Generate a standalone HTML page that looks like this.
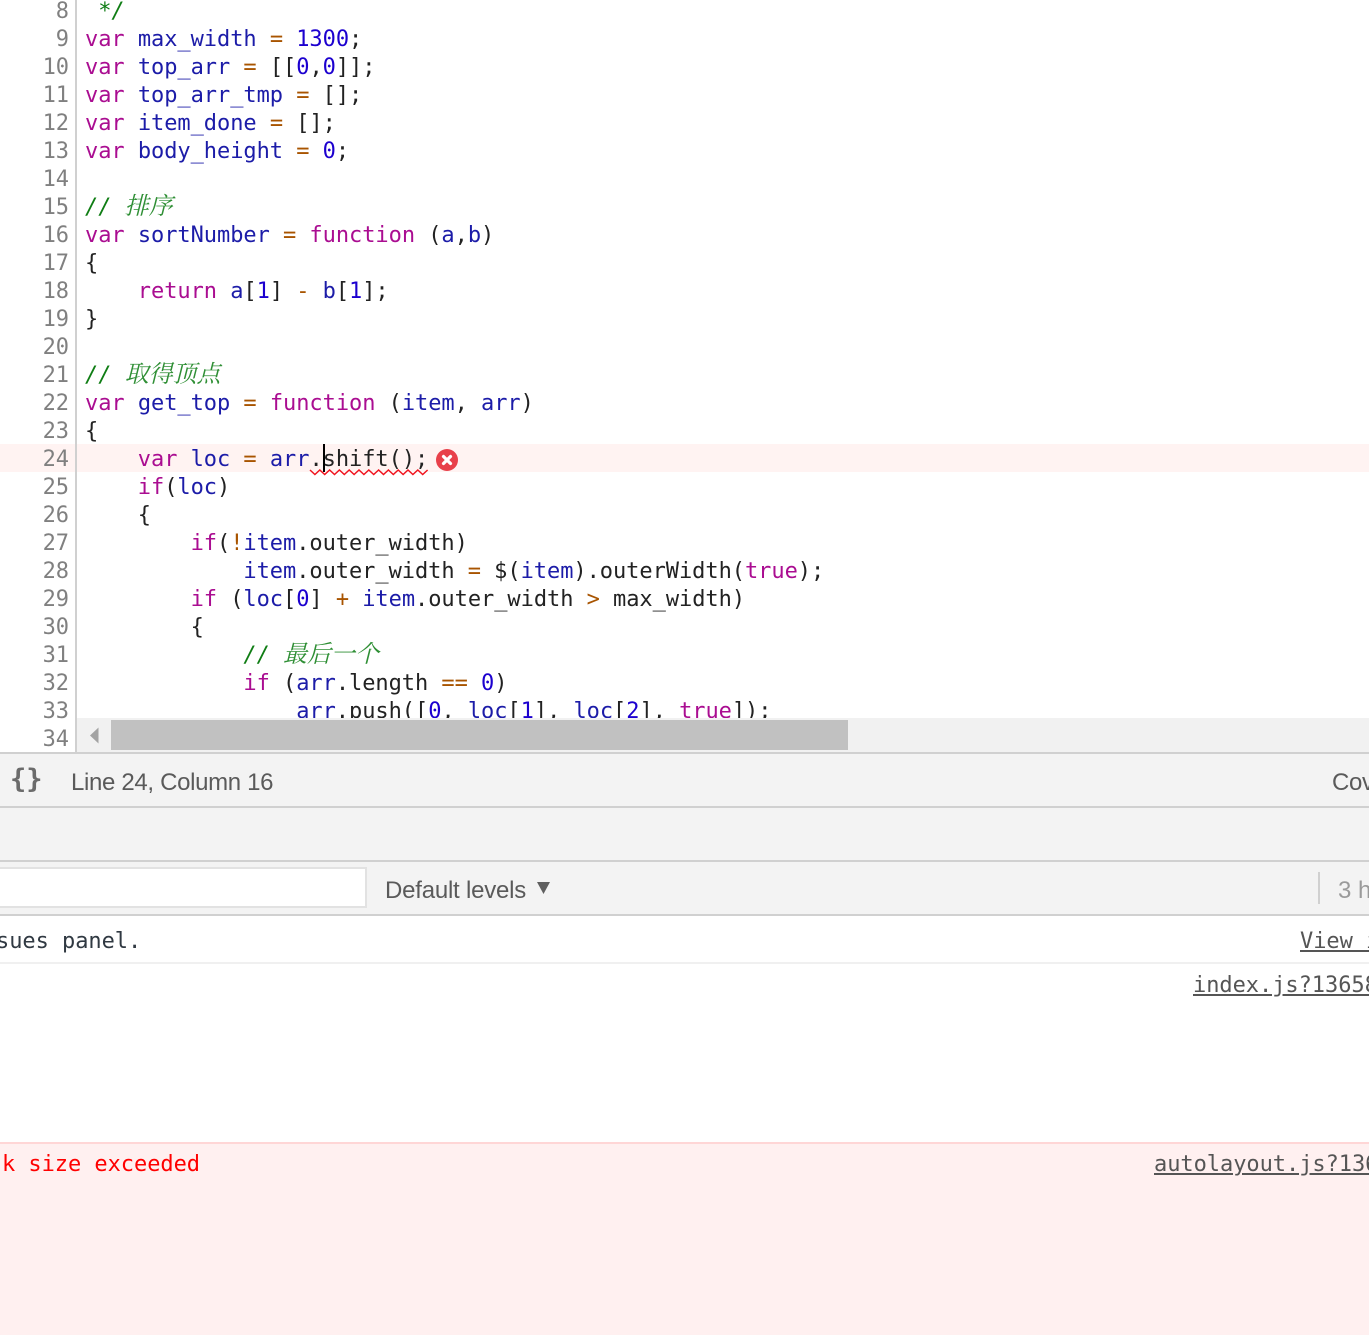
<!DOCTYPE html>
<html><head><meta charset="utf-8"><style>
html,body{margin:0;padding:0;background:#fff;overflow:hidden}
#r{position:relative;width:1369px;height:1335px;overflow:hidden;background:#fff}
.a{position:absolute}
.n,.l{position:absolute;height:28px;margin-top:2px;font:22px/28px "DejaVu Sans Mono",monospace;letter-spacing:-.046px;white-space:pre}
.n{left:0;width:69px;text-align:right;color:#808080}
.l{left:85px;color:#222}
i{font-style:normal}
.k{color:#aa0d91}.v{color:#1c1ca8}.o{color:#a85400}.d{color:#1c00cf}
.c{color:#0f7d14;font-style:italic}
.c b{font:italic 24px/0 "Noto Serif CJK SC",serif;color:#2f8f35}
.u{font:24px/30px "Liberation Sans",sans-serif;white-space:pre;color:#5a5a5a}
.m{font:22px/28px "DejaVu Sans Mono",monospace;letter-spacing:-.046px;white-space:pre;color:#303942}
.ln{text-decoration:underline;color:#555}
</style></head><body><div id="r">
<div class="a" style="left:0;top:444px;width:1369px;height:28px;background:#fff3f2"></div>
<div class="a" style="left:75px;top:0;width:2px;height:752px;background:#d0d0d0"></div>

<div class="n" style="top:-4px">8</div><div class="l" style="top:-4px"><i class="c"> */</i></div>
<div class="n" style="top:24px">9</div><div class="l" style="top:24px"><i class="k">var</i> <i class="v">max_width</i> <i class="o">=</i> <i class="d">1300</i>;</div>
<div class="n" style="top:52px">10</div><div class="l" style="top:52px"><i class="k">var</i> <i class="v">top_arr</i> <i class="o">=</i> [[<i class="d">0</i>,<i class="d">0</i>]];</div>
<div class="n" style="top:80px">11</div><div class="l" style="top:80px"><i class="k">var</i> <i class="v">top_arr_tmp</i> <i class="o">=</i> [];</div>
<div class="n" style="top:108px">12</div><div class="l" style="top:108px"><i class="k">var</i> <i class="v">item_done</i> <i class="o">=</i> [];</div>
<div class="n" style="top:136px">13</div><div class="l" style="top:136px"><i class="k">var</i> <i class="v">body_height</i> <i class="o">=</i> <i class="d">0</i>;</div>
<div class="n" style="top:164px">14</div>
<div class="n" style="top:192px">15</div><div class="l" style="top:192px"><i class="c">// <b>排序</b></i></div>
<div class="n" style="top:220px">16</div><div class="l" style="top:220px"><i class="k">var</i> <i class="v">sortNumber</i> <i class="o">=</i> <i class="k">function</i> (<i class="v">a</i>,<i class="v">b</i>)</div>
<div class="n" style="top:248px">17</div><div class="l" style="top:248px">{</div>
<div class="n" style="top:276px">18</div><div class="l" style="top:276px">    <i class="k">return</i> <i class="v">a</i>[<i class="d">1</i>] <i class="o">-</i> <i class="v">b</i>[<i class="d">1</i>];</div>
<div class="n" style="top:304px">19</div><div class="l" style="top:304px">}</div>
<div class="n" style="top:332px">20</div>
<div class="n" style="top:360px">21</div><div class="l" style="top:360px"><i class="c">// <b>取得顶点</b></i></div>
<div class="n" style="top:388px">22</div><div class="l" style="top:388px"><i class="k">var</i> <i class="v">get_top</i> <i class="o">=</i> <i class="k">function</i> (<i class="v">item</i>, <i class="v">arr</i>)</div>
<div class="n" style="top:416px">23</div><div class="l" style="top:416px">{</div>
<div class="n" style="top:444px">24</div><div class="l" style="top:444px">    <i class="k">var</i> <i class="v">loc</i> <i class="o">=</i> <i class="v">arr</i>.shift();</div>
<div class="n" style="top:472px">25</div><div class="l" style="top:472px">    <i class="k">if</i>(<i class="v">loc</i>)</div>
<div class="n" style="top:500px">26</div><div class="l" style="top:500px">    {</div>
<div class="n" style="top:528px">27</div><div class="l" style="top:528px">        <i class="k">if</i>(<i class="o">!</i><i class="v">item</i>.outer_width)</div>
<div class="n" style="top:556px">28</div><div class="l" style="top:556px">            <i class="v">item</i>.outer_width <i class="o">=</i> $(<i class="v">item</i>).outerWidth(<i class="k">true</i>);</div>
<div class="n" style="top:584px">29</div><div class="l" style="top:584px">        <i class="k">if</i> (<i class="v">loc</i>[<i class="d">0</i>] <i class="o">+</i> <i class="v">item</i>.outer_width <i class="o">&gt;</i> max_width)</div>
<div class="n" style="top:612px">30</div><div class="l" style="top:612px">        {</div>
<div class="n" style="top:640px">31</div><div class="l" style="top:640px">            <i class="c">// <b>最后一个</b></i></div>
<div class="n" style="top:668px">32</div><div class="l" style="top:668px">            <i class="k">if</i> (<i class="v">arr</i>.length <i class="o">==</i> <i class="d">0</i>)</div>
<div class="n" style="top:696px">33</div><div class="l" style="top:696px">                <i class="v">arr</i>.push([<i class="d">0</i>, <i class="v">loc</i>[<i class="d">1</i>], <i class="v">loc</i>[<i class="d">2</i>], <i class="k">true</i>]);</div>
<div class="n" style="top:724px">34</div>

<div class="a" style="left:323px;top:444px;width:2px;height:28px;background:#000"></div>
<svg class="a" style="left:305px;top:464px" width="130" height="14"><path d="M5 6l4.900 4.500 4.900-4.500 4.900 4.500 4.900-4.500 4.900 4.500 4.900-4.500 4.900 4.500 4.900-4.500 4.900 4.500 4.900-4.500 4.900 4.500 4.900-4.500 4.900 4.500 4.900-4.500 4.900 4.500 4.900-4.500 4.900 4.500 4.900-4.500 4.900 4.500 4.900-4.500 4.900 4.500 4.900-4.500 4.900 4.500 4.900-4.500" fill="none" stroke="#f0141e" stroke-width="1.500"/></svg>
<svg class="a" style="left:436px;top:449px" width="22" height="22"><circle cx="11" cy="11" r="11" fill="#e8404a"/><path d="M7.500 7.500l7 7M14.500 7.500l-7 7" stroke="#fff" stroke-width="3.200" stroke-linecap="round"/></svg>

<div class="a" style="left:77px;top:718px;width:1292px;height:34px;background:#f1f1f1"></div>
<svg class="a" style="left:88px;top:727px" width="12" height="18"><path d="M10.500 .5v16L2 8.500z" fill="#a3a3a3"/></svg>
<div class="a" style="left:111px;top:720px;width:737px;height:30px;background:#c1c1c1"></div>

<div class="a" style="left:0;top:752px;width:1369px;height:164px;background:#f3f3f3"></div>
<div class="a" style="left:0;top:752px;width:1369px;height:2px;background:#d0d0d0"></div>
<div class="a" style="left:0;top:806px;width:1369px;height:2px;background:#d0d0d0"></div>
<div class="a" style="left:0;top:860px;width:1369px;height:2px;background:#d0d0d0"></div>
<div class="a" style="left:0;top:914px;width:1369px;height:2px;background:#d0d0d0"></div>

<div class="a" style="left:10px;top:763px;font:bold 27px/34px 'DejaVu Sans Mono',monospace;color:#6b6b6b;white-space:pre">{}</div>
<div class="a u" style="left:71px;top:768px;letter-spacing:-.33px">Line 24, Column 16</div>
<div class="a u" style="left:1332px;top:768px;letter-spacing:-.33px">Cov</div>

<div class="a" style="left:-4px;top:867px;width:367px;height:37px;background:#fff;border:2px solid #e2e2e2"></div>
<div class="a u" style="left:385px;top:876px;letter-spacing:-.22px">Default levels</div>
<svg class="a" style="left:536px;top:881px" width="15" height="14"><path d="M1 1h13L7.500 13z" fill="#5f5f5f"/></svg>
<div class="a" style="left:1318px;top:872px;width:2px;height:32px;background:#d0d0d0"></div>
<div class="a u" style="left:1338px;top:876px;color:#9a9a9a">3 h</div>

<div class="a m" style="left:-4px;top:928px">sues panel.</div>
<div class="a m ln" style="left:1300px;top:928px">View issues</div>
<div class="a" style="left:0;top:962px;width:1369px;height:2px;background:#f0f0f0"></div>
<div class="a m ln" style="left:1193px;top:972px">index.js?13658</div>

<div class="a" style="left:0;top:1142px;width:1369px;height:193px;background:#fff0f0"></div>
<div class="a" style="left:0;top:1142px;width:1369px;height:2px;background:#ffd6d6"></div>
<div class="a m" style="left:2px;top:1151px;color:#f00">k size exceeded</div>
<div class="a m ln" style="left:1154px;top:1151px">autolayout.js?13658</div>
</div></body></html>
